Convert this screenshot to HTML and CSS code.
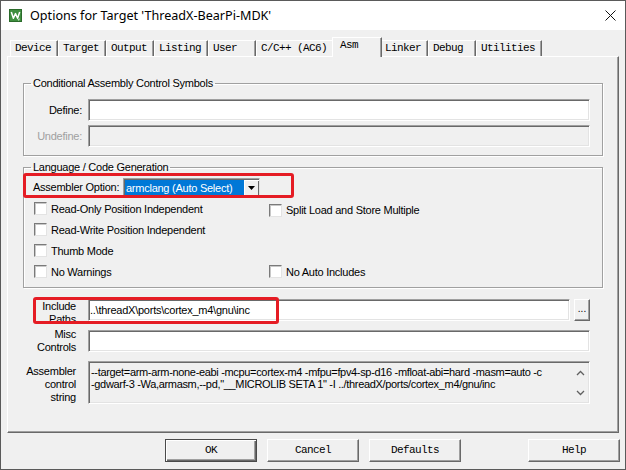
FILE: index.html
```html
<!DOCTYPE html>
<html>
<head>
<meta charset="utf-8">
<title>Options for Target</title>
<link rel="stylesheet" href="styles.css">
</head>
<body>
<div class="window">
  <div class="titlebar">
    <svg class="app-icon" width="13" height="13" viewBox="0 0 13 13">
      <rect x="0.5" y="0.5" width="12" height="12" fill="#3f8f3f" stroke="#2b6b2b"/>
      <path d="M2.3 3 L4.4 9.2 L6.5 4.6 L8.6 9.2 L10.7 3" stroke="#fff" stroke-width="1.5" fill="none" stroke-linejoin="round"/>
      <path d="M8.9 9.6 L9.7 11.4 L10.5 9.6" stroke="#e8f5e8" stroke-width="0.8" fill="none"/>
    </svg>
    <span class="title">Options for Target 'ThreadX-BearPi-MDK'</span>
    <svg class="close" width="11" height="11" viewBox="0 0 11 11">
      <path d="M0.5 0.5 L10.5 10.5 M10.5 0.5 L0.5 10.5" stroke="#111" stroke-width="1"/>
    </svg>
  </div>

  <div class="tabs">
    <div class="tab">Device</div>
    <div class="tab">Target</div>
    <div class="tab">Output</div>
    <div class="tab">Listing</div>
    <div class="tab">User</div>
    <div class="tab">C/C++ (AC6)</div>
    <div class="tab active">Asm</div>
    <div class="tab">Linker</div>
    <div class="tab">Debug</div>
    <div class="tab">Utilities</div>
  </div>

  <div class="panel">
    <fieldset class="group">
      <legend>Conditional Assembly Control Symbols</legend>
      <div class="define-grid">
        <span class="lbl">Define:</span>
        <div class="edit"></div>
        <span class="lbl disabled">Undefine:</span>
        <div class="edit readonly"></div>
      </div>
    </fieldset>

    <fieldset class="group group-lang">
      <legend>Language / Code Generation</legend>
      <div class="opt-row">
        <span class="opt-label">Assembler Option:</span>
        <div class="combo">
          <span class="combo-sel">armclang (Auto Select)</span>
          <span class="combo-btn">
            <svg width="7" height="4" viewBox="0 0 7 4"><path d="M0 0 H7 L3.5 4 Z" fill="#000"/></svg>
          </span>
        </div>
        <div class="mark mark-opt"></div>
      </div>
      <div class="checks">
        <label class="check"><span class="box"></span>Read-Only Position Independent</label>
        <label class="check lower"><span class="box"></span>Split Load and Store Multiple</label>
        <label class="check"><span class="box"></span>Read-Write Position Independent</label>
        <span></span>
        <label class="check"><span class="box"></span>Thumb Mode</label>
        <span></span>
        <label class="check"><span class="box"></span>No Warnings</label>
        <label class="check"><span class="box"></span>No Auto Includes</label>
      </div>
    </fieldset>

    <div class="paths">
      <span class="lbl2 l-inc">Include<br>Paths</span>
      <div class="inc-field">
        <div class="edit grow"><span class="edit-text">..\threadX\ports\cortex_m4\gnu\inc</span></div>
        <div class="browse">...</div>
      </div>
      <span class="lbl2 l-misc">Misc<br>Controls</span>
      <div class="edit"></div>
      <span class="lbl2 l-str">Assembler<br>control<br>string</span>
      <div class="textbox">
        <div class="tb-text">--target=arm-arm-none-eabi -mcpu=cortex-m4 -mfpu=fpv4-sp-d16 -mfloat-abi=hard -masm=auto -c<br>-gdwarf-3 -Wa,armasm,--pd,"__MICROLIB SETA 1" -I ../threadX/ports/cortex_m4/gnu/inc</div>
        <div class="vscroll">
          <svg width="9" height="6" viewBox="0 0 9 6"><path d="M1 5 L4.5 1.5 L8 5" stroke="#606060" stroke-width="1.3" fill="none"/></svg>
          <svg width="9" height="6" viewBox="0 0 9 6"><path d="M1 1 L4.5 4.5 L8 1" stroke="#606060" stroke-width="1.3" fill="none"/></svg>
        </div>
      </div>
      <div class="mark mark-inc"></div>
    </div>
  </div>

  <div class="btnbar">
    <div class="btn default">OK</div>
    <div class="btn">Cancel</div>
    <div class="btn">Defaults</div>
    <div class="btn help">Help</div>
  </div>
</div>
</body>
</html>
```

FILE: styles.css
```css
* { box-sizing: border-box; }
html, body { margin: 0; padding: 0; }
body {
  width: 626px;
  height: 470px;
  overflow: hidden;
  background: #f0f0f0;
  font-family: "Liberation Sans", Arial, sans-serif;
  font-size: 11px;
  letter-spacing: -0.25px;
  color: #000;
}
.window {
  width: 626px;
  height: 470px;
  border: 1px solid #5a5a5a;
  background: #f0f0f0;
  display: flex;
  flex-direction: column;
}

/* title bar */
.titlebar {
  flex: none;
  height: 29px;
  background: #fff;
  display: flex;
  align-items: center;
}
.app-icon { margin-left: 8px; flex: none; }
.title {
  margin-left: 8px;
  font-family: "Noto Sans", "Liberation Sans", sans-serif;
  font-size: 12.6px;
  letter-spacing: 0;
  color: #000;
}
.close { margin-left: auto; margin-right: 9px; flex: none; }

/* tabs */
.tabs {
  flex: none;
  margin: 7px 0 0 9px;
  height: 19px;
  display: flex;
  align-items: flex-end;
}
.tab {
  height: 16px;
  min-width: 48px;
  padding: 0 6px 0 4px;
  font-family: "Liberation Mono", "DejaVu Sans Mono", monospace;
  font-size: 11px;
  letter-spacing: -0.6px;
  line-height: 15px;
  white-space: nowrap;
  background: #f0f0f0;
  border-top: 1px solid #fff;
  border-left: 1px solid #fff;
  border-right: 1px solid #696969;
  box-shadow: inset -1px 0 0 #a0a0a0;
  border-top-left-radius: 1px;
}
.tab.active {
  position: relative;
  z-index: 1;
  width: 50px;
  height: 20px;
  margin: 0 -2px -1px -2px;
  padding-left: 7px;
}

/* panel */
.panel {
  flex: none;
  margin-left: 6px;
  width: 612px;
  height: 377px;
  border-top: 1px solid #fff;
  border-left: 1px solid #fff;
  border-right: 1px solid #696969;
  border-bottom: 1px solid #696969;
  box-shadow: inset -1px -1px 0 #a0a0a0;
  padding: 20px 15px 0 15px;
}

.group {
  margin: 0;
  padding: 0 0 8px 0;
  min-width: 0;
  border: 1px solid #a0a0a0;
  box-shadow: inset 1px 1px 0 #fff, 1px 1px 0 #fff;
}
.group legend {
  margin-left: 7px;
  padding: 0 2px;
  line-height: 13px;
}
.group-lang { margin-top: 5px; padding-bottom: 5px; }

.define-grid {
  margin-top: 9px;
  display: grid;
  grid-template-columns: 58px 502px;
  grid-auto-rows: 22px;
  column-gap: 6px;
  row-gap: 4px;
}
.lbl { text-align: right; line-height: 22px; white-space: nowrap; }
.lbl.disabled { color: #a0a0a0; }

.edit {
  height: 22px;
  background: #fff;
  border: 1px solid;
  border-color: #a0a0a0 #fff #fff #a0a0a0;
  box-shadow: inset 1px 1px 0 #696969, inset -1px -1px 0 #e3e3e3;
}
.edit.readonly { background: #f0f0f0; }
.edit-text { display: block; padding-left: 1px; line-height: 20px; white-space: nowrap; }

/* assembler option row */
.opt-row {
  position: relative;
  height: 24px;
  display: flex;
  align-items: center;
  padding: 2px 0 0 9px;
}
.opt-label { width: 90px; white-space: nowrap; }
.combo {
  width: 137px;
  height: 19px;
  display: flex;
  background: #fff;
  border: 1px solid;
  border-color: #a0a0a0 #e3e3e3 #e3e3e3 #a0a0a0;
  box-shadow: inset 1px 1px 0 #696969;
  padding: 1px 0 0 1px;
}
.combo-sel {
  flex: 1;
  background: #0078d7;
  color: #fff;
  line-height: 16px;
  padding-left: 1px;
  white-space: nowrap;
}
.combo-btn {
  width: 15px;
  display: flex;
  align-items: center;
  justify-content: center;
  background: #f0f0f0;
  box-shadow: inset 1px 1px 0 #fff, inset -1px -1px 0 #696969;
}

.mark {
  position: absolute;
  border: 3px solid #e51c24;
  border-radius: 3px;
  pointer-events: none;
}
.mark-opt { left: -1px; top: -1px; width: 271px; height: 25px; }

/* checkboxes */
.checks {
  display: grid;
  grid-template-columns: 235px auto;
  grid-auto-rows: 21px;
  align-items: center;
  padding-left: 10px;
}
.check {
  display: flex;
  align-items: center;
  gap: 4px;
  white-space: nowrap;
}
.check.lower { padding-top: 3px; }
.box {
  width: 13px;
  height: 13px;
  flex: none;
  background: #fff;
  border: 1px solid;
  border-color: #7a7a7a #e3e3e3 #e3e3e3 #7a7a7a;
  box-shadow: inset 1px 1px 0 #c8c8c8;
}

/* bottom section */
.paths {
  position: relative;
  margin-top: 11px;
  display: grid;
  grid-template-columns: 53px 502px;
  grid-template-rows: 22px 22px 43px;
  column-gap: 12px;
  row-gap: 9px;
  align-items: start;
}
.lbl2 { text-align: right; line-height: 13px; white-space: nowrap; }
.l-inc { margin-top: 1px; }
.l-misc { margin-top: -2px; }
.l-str { margin-top: 4px; }
.inc-field { display: flex; gap: 4px; }
.grow { flex: 1; }
.browse {
  width: 16px;
  height: 22px;
  background: #f0f0f0;
  border: 1px solid;
  border-color: #fff #696969 #696969 #fff;
  box-shadow: inset -1px -1px 0 #a0a0a0;
  text-align: center;
  line-height: 18px;
  letter-spacing: 0;
  font-size: 10px;
}
.textbox {
  height: 43px;
  display: flex;
  background: #f0f0f0;
  border: 1px solid;
  border-color: #a0a0a0 #fff #fff #a0a0a0;
  box-shadow: inset 1px 1px 0 #696969, inset -1px -1px 0 #e3e3e3;
}
.tb-text {
  flex: 1;
  padding: 4px 0 0 2px;
  line-height: 12px;
  letter-spacing: -0.33px;
  white-space: nowrap;
  overflow: hidden;
}
.vscroll {
  width: 18px;
  flex: none;
  display: flex;
  flex-direction: column;
  align-items: center;
  justify-content: space-between;
  padding: 8px 0 7px 0;
}
.mark-inc { left: 10px; top: -2px; width: 246px; height: 27px; }

/* buttons */
.btnbar {
  flex: none;
  margin: 6px 5px 0 6px;
  padding-left: 158px;
  display: flex;
  gap: 10px;
}
.btn {
  width: 92px;
  height: 23px;
  background: #f0f0f0;
  border: 1px solid;
  border-color: #fff #696969 #696969 #fff;
  box-shadow: inset -1px -1px 0 #a0a0a0;
  font-family: "Liberation Mono", "DejaVu Sans Mono", monospace;
  font-size: 11px;
  letter-spacing: -0.6px;
  line-height: 21px;
  text-align: center;
}
.btn.default {
  border-color: #4a4a4a;
  box-shadow: inset 1px 1px 0 #fff, inset -1px -1px 0 #696969, inset -2px -2px 0 #a0a0a0;
}
.btn.help { margin-left: auto; }
```
